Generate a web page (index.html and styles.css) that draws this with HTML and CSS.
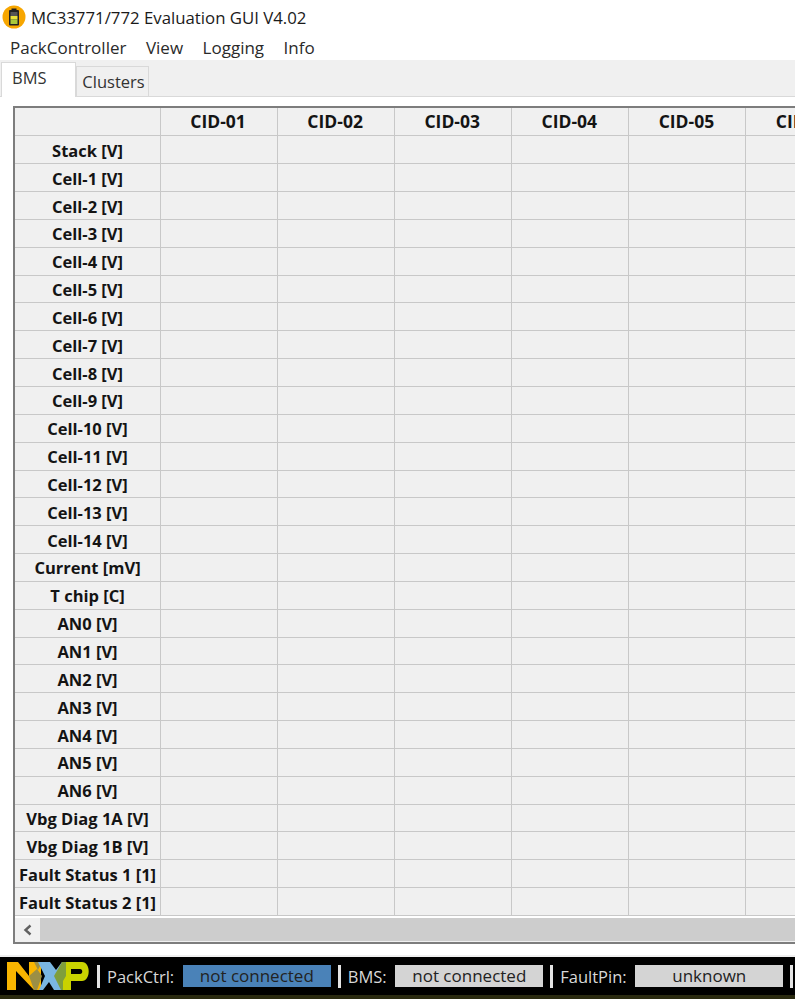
FILE: index.html
```html
<!DOCTYPE html>
<html lang="en">
<head>
    <meta charset="UTF-8">
    <title>MC33771/772 Evaluation GUI V4.02</title>
    <link rel="stylesheet" href="styles.css">
</head>
<body>
    <div class="titlebar">
        <svg class="appicon" viewBox="0 0 24 24" width="24" height="24">
            <circle cx="12" cy="12" r="11.5" fill="#f7a600"/>
            <rect x="9.5" y="3.5" width="5" height="2" fill="#222"/>
            <rect x="7" y="5" width="10" height="15.5" rx="1" fill="#222"/>
            <rect x="8.5" y="7" width="7" height="4" fill="#555"/>
            <rect x="8.5" y="11" width="7" height="3.5" fill="#e8e23a"/>
            <rect x="8.5" y="14.5" width="7" height="4.5" fill="#a9c93a"/>
        </svg>
        <span class="title">MC33771/772 Evaluation GUI V4.02</span>
    </div>

    <nav class="menubar">
        <a>PackController</a>
        <a>View</a>
        <a>Logging</a>
        <a>Info</a>
    </nav>

    <div class="tabs">
        <div class="tab active">BMS</div>
        <div class="tab">Clusters</div>
    </div>

    <div class="pane">
        <div class="frame">
            <div class="grid" id="grid"></div>
            <div class="scrollbar">
                <div class="arrow">
                    <svg viewBox="0 0 12 12" width="12" height="12">
                        <path d="M8.5 1.5 L3.5 6 L8.5 10.5" fill="none" stroke="#606060" stroke-width="2.4"/>
                    </svg>
                </div>
                <div class="track"></div>
            </div>
        </div>
    </div>

    <footer class="statusbar">
        <svg class="logo" viewBox="0 0 84 30" width="84" height="30">
            <path d="M0 1 H11 L22 15 V1 H30 L34 1 L34 29 H27 L9 10 V29 H0 Z" fill="#f9b500"/>
            <path d="M27 1 H35 L31 9 Z M22 15 L30 8 L35 15 L30 29 H27 Z" fill="#9b8f45"/>
            <path d="M31 1 H43 L49 9 L55 1 H58 L50 15 L59 29 H47 L42 21 L36 29 H32 L38 15 Z" fill="#7ab6e1"/>
            <path d="M55 1 H60 L60 29 H54 L47 15 Z" fill="#7f9e3c"/>
            <path fill-rule="evenodd" d="M58 1 H75 C84 1 84 20 75 20 H64 V29 H56 L56 20 L59 15 V1 Z M64 8 V13 H73 C76 13 76 8 73 8 Z" fill="#c9d200"/>
        </svg>
        <span class="sep"></span>
        <span class="label">PackCtrl:</span>
        <span class="state blue">not connected</span>
        <span class="sep"></span>
        <span class="label">BMS:</span>
        <span class="state">not connected</span>
        <span class="sep"></span>
        <span class="label">FaultPin:</span>
        <span class="state">unknown</span>
        <span class="sep"></span>
    </footer>
    <div class="strip"></div>

    <script>
        const rows = ['Stack [V]'];
        for (let i = 1; i <= 14; i++) rows.push(`Cell-${i} [V]`);
        rows.push('Current [mV]', 'T chip [C]');
        for (let i = 0; i <= 6; i++) rows.push(`AN${i} [V]`);
        rows.push('Vbg Diag 1A [V]', 'Vbg Diag 1B [V]', 'Fault Status 1 [1]', 'Fault Status 2 [1]');

        let html = '<div class="corner"></div>';
        for (let c = 1; c <= 6; c++) html += `<div class="colhead">CID-0${c}</div>`;
        rows.forEach(name => {
            html += `<div class="rowhead">${name}</div>`;
            for (let c = 0; c < 6; c++) html += '<div class="cell"></div>';
        });
        // last row is cut off by the scrollbar
        html += '<div class="rowhead"></div>';
        for (let c = 0; c < 6; c++) html += '<div class="cell"></div>';
        document.getElementById('grid').innerHTML = html;
    </script>
</body>
</html>
```

FILE: styles.css
```css
html, body {
    margin: 0;
    height: 100%;
    overflow: hidden;
    background-color: #fff;
    font-family: "Open Sans", "Noto Sans", sans-serif;
    color: #1a1a1a;
}

body {
    display: flex;
    flex-direction: column;
    height: 999px;
}

.titlebar {
    height: 34px;
    display: flex;
    align-items: center;
    padding-left: 2px;
    gap: 5px;
    flex: none;
}

.title {
    font-size: 16.8px;
}

.menubar {
    height: 26px;
    box-sizing: border-box;
    padding: 1px 0 0 10px;
    flex: none;
    display: flex;
    align-items: center;
    gap: 19.5px;
    font-size: 17px;
    color: #2a2a2a;
}

.tabs {
    height: 37px;
    flex: none;
    display: flex;
    align-items: flex-end;
    background-color: #f0f0f0;
    border-bottom: 1px solid #d9d9d9;
    box-sizing: border-box;
}

.tab {
    height: 30px;
    width: 73px;
    box-sizing: border-box;
    border: 1px solid #d9d9d9;
    border-bottom: none;
    padding-left: 2px;
    font-size: 16.5px;
    text-align: center;
    line-height: 30px;
    color: #333;
}

.tab.active {
    width: 75px;
    height: 35px;
    margin-bottom: -1px;
    margin-left: 1px;
    padding-left: 10px;
    background-color: #fff;
    text-align: left;
    line-height: 30px;
}

.pane {
    flex: 1;
    min-height: 0;
    padding: 9px 0 11px 13px;
    background-color: #fff;
    border-bottom: 2px solid #f0f0f0;
}

.frame {
    height: 100%;
    box-sizing: border-box;
    border-top: 2px solid #7d7d7d;
    border-left: 2px solid #7d7d7d;
    border-bottom: 2px solid #7d7d7d;
    display: flex;
    flex-direction: column;
    overflow: hidden;
}

.grid {
    flex: 1;
    min-height: 0;
    overflow: hidden;
    display: grid;
    grid-template-columns: 146px repeat(6, 117.1px);
    grid-template-rows: 28.4px;
    grid-auto-rows: 27.85px;
    background-color: #f0f0f0;
    width: 900px;
}

.corner,
.colhead,
.rowhead,
.cell {
    box-sizing: border-box;
    border-right: 1.5px solid #c8c8c8;
    border-bottom: 1.5px solid #c8c8c8;
}

.colhead,
.rowhead {
    font-weight: 700;
    display: flex;
    align-items: center;
    justify-content: center;
    white-space: nowrap;
    color: #141414;
}

.colhead {
    font-size: 17.5px;
    padding: 0 2px 2px 0;
}

.rowhead {
    font-size: 16.5px;
    padding-top: 1px;
}

.scrollbar {
    height: 24px;
    flex: none;
    display: flex;
    background-color: #f0f0f0;
    margin-top: 2px;
}

.arrow {
    width: 25px;
    display: flex;
    align-items: center;
    justify-content: center;
}

.track {
    flex: 1;
    background-color: #cdcdcd;
    margin-bottom: 1px;
}

.statusbar {
    height: 38px;
    flex: none;
    display: flex;
    align-items: center;
    background-color: #000;
    padding-left: 7px;
    color: #d8d8d8;
    font-size: 16.5px;
}

.logo {
    margin-right: 6px;
    flex: none;
}

.sep {
    width: 3px;
    height: 23px;
    background-color: #e4e4e4;
    flex: none;
}

.label {
    margin: 0 8.6px 0 7px;
}

.state {
    width: 148px;
    height: 22px;
    flex: none;
    background-color: #d4d4d4;
    color: #222;
    font-size: 17px;
    text-align: center;
    line-height: 22px;
    margin-right: 7px;
}

.state.blue {
    background-color: #4a82b8;
}

.strip {
    height: 4px;
    flex: none;
    background-color: #2a2a10;
}
```
